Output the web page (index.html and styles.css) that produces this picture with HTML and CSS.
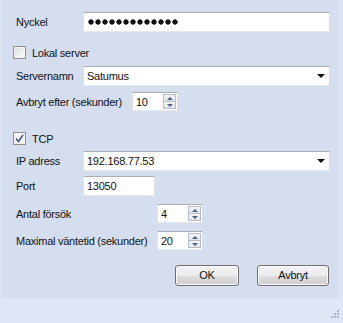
FILE: index.html
```html
<!DOCTYPE html>
<html lang="sv">

<head>
    <meta charset="UTF-8">
    <meta name="viewport" content="width=device-width, initial-scale=1.0">
    <title>Anslutning</title>
    <link rel="stylesheet" href="styles.css">
</head>

<body>
    <div class="dialog">
        <div class="form">
            <div class="row r-key">
                <span class="lbl">Nyckel</span>
                <div class="field wide"><span class="dots"></span></div>
            </div>
            <div class="row r-local">
                <span class="check"></span>
                <span class="check-text">Lokal server</span>
            </div>
            <div class="row r-server">
                <span class="lbl">Servernamn</span>
                <div class="field wide combo">Satumus<span class="arrow"></span></div>
            </div>
            <div class="row r-timeout">
                <span class="lbl lbl-long">Avbryt efter (sekunder)</span>
                <div class="field num">10<span class="spin"><i class="up"></i><i class="down"></i></span></div>
            </div>
            <div class="row r-tcp">
                <span class="check on"><svg width="9" height="9" viewBox="0 0 9 9"><path d="M1 4.5 L3.5 7.5 L8 0.8" fill="none" stroke="#3d4f86" stroke-width="1.5"/></svg></span>
                <span class="check-text">TCP</span>
            </div>
            <div class="row r-ip">
                <span class="lbl">IP adress</span>
                <div class="field wide combo">192.168.77.53<span class="arrow"></span></div>
            </div>
            <div class="row r-port">
                <span class="lbl">Port</span>
                <div class="field port">13050</div>
            </div>
            <div class="row r-tries">
                <span class="lbl lbl-num">Antal försök</span>
                <div class="field num">4<span class="spin"><i class="up"></i><i class="down"></i></span></div>
            </div>
            <div class="row r-wait">
                <span class="lbl lbl-num">Maximal väntetid (sekunder)</span>
                <div class="field num">20<span class="spin"><i class="up"></i><i class="down"></i></span></div>
            </div>
        </div>
        <div class="actions">
            <div class="btn">OK</div>
            <div class="btn">Avbryt</div>
        </div>
        <div class="status">
            <svg class="grip" width="10" height="10" viewBox="0 0 10 10">
                <rect x="7" y="1" width="2" height="2" fill="#aab4c8"/>
                <rect x="4" y="4" width="2" height="2" fill="#aab4c8"/>
                <rect x="7" y="4" width="2" height="2" fill="#aab4c8"/>
                <rect x="1" y="7" width="2" height="2" fill="#aab4c8"/>
                <rect x="4" y="7" width="2" height="2" fill="#aab4c8"/>
                <rect x="7" y="7" width="2" height="2" fill="#aab4c8"/>
            </svg>
        </div>
    </div>
</body>

</html>
```

FILE: styles.css
```css
body {
    margin: 0;
    font-family: "Liberation Sans", Arial, sans-serif;
    font-size: 11px;
    letter-spacing: -0.25px;
    color: #111;
}

.dialog {
    width: 343px;
    height: 323px;
    display: flex;
    flex-direction: column;
    background-color: #d5deef;
    border-left: 3px solid #dce3f3;
    border-right: 5px solid #dce3f3;
    box-sizing: border-box;
}

.form {
    padding-left: 13px;
}

.row {
    display: flex;
    align-items: center;
}

.lbl {
    width: 67px;
    flex: none;
}
.lbl-long { width: 116px; }
.lbl-num { width: 141px; }

.r-key { margin-top: 12px; }
.r-local { margin-top: 14px; margin-left: -3px; }
.r-server { margin-top: 7px; }
.r-timeout { margin-top: 6px; }
.r-tcp { margin-top: 21px; margin-left: -3px; }
.r-ip { margin-top: 6px; }
.r-port { margin-top: 5px; }
.r-tries { margin-top: 8px; }
.r-wait { margin-top: 8px; }

.field {
    position: relative;
    height: 20px;
    line-height: 19px;
    box-sizing: border-box;
    padding-left: 3px;
    background: #fff;
    border: 1px solid #e3e9ef;
    border-top-color: #abadb3;
    border-left-color: #e2e3ea;
    border-right-color: #dbdfe6;
    white-space: nowrap;
    overflow: hidden;
}
.wide { width: 247px; }
.port { width: 72px; }
.num { width: 46px; height: 19px; line-height: 18px; }

.dots {
    display: block;
    width: 91px;
    height: 6px;
    margin: 6px 0 0 1px;
    background: radial-gradient(circle at 3px 3px, #111 2.3px, transparent 3px) repeat-x;
    background-size: 7px 6px;
}

.combo .arrow {
    position: absolute;
    right: 4px;
    top: 7px;
    width: 0;
    height: 0;
    border-left: 4px solid transparent;
    border-right: 4px solid transparent;
    border-top: 4px solid #111;
}

.spin {
    position: absolute;
    right: 1px;
    top: 1px;
    bottom: 1px;
    width: 13px;
    display: flex;
    flex-direction: column;
}
.spin i {
    flex: 1;
    position: relative;
    border: 1px solid #b6bdc9;
    background: linear-gradient(#f4f4f4, #e2e4e8);
}
.spin i + i { border-top: none; }
.spin i::after {
    content: "";
    position: absolute;
    left: 3px;
    top: 2px;
    border-left: 3px solid transparent;
    border-right: 3px solid transparent;
}
.spin .up::after { border-bottom: 3px solid #4d6185; }
.spin .down::after { border-top: 3px solid #4d6185; top: 2px; }

.check {
    width: 13px;
    height: 13px;
    box-sizing: border-box;
    border: 1px solid #8f8f8f;
    background: linear-gradient(135deg, #dcdcdc, #fbfbfb);
    box-shadow: inset 0 0 0 1px #f4f4f4;
    display: flex;
    align-items: center;
    justify-content: center;
}
.check.on { background: #f4f4f4; }
.check-text { margin-left: 6px; }

.actions {
    display: flex;
    justify-content: flex-end;
    gap: 18px;
    margin-top: auto;
    padding-right: 9px;
    margin-bottom: 12px;
}

.btn {
    width: 64px;
    height: 21px;
    line-height: 19px;
    box-sizing: border-box;
    text-align: center;
    border: 1px solid #707070;
    border-radius: 3px;
    background: linear-gradient(#f2f2f2 0%, #ebebeb 50%, #dddddd 51%, #cfcfcf 100%);
    box-shadow: inset 0 0 0 1px #fbfbfb;
}
.btn + .btn { width: 72px; }

.status {
    height: 21px;
    margin: 0 -5px 0 -3px;
    background-color: #dfe6f6;
    display: flex;
    justify-content: flex-end;
    align-items: flex-end;
    padding: 0 3px 4px 0;
}
```
